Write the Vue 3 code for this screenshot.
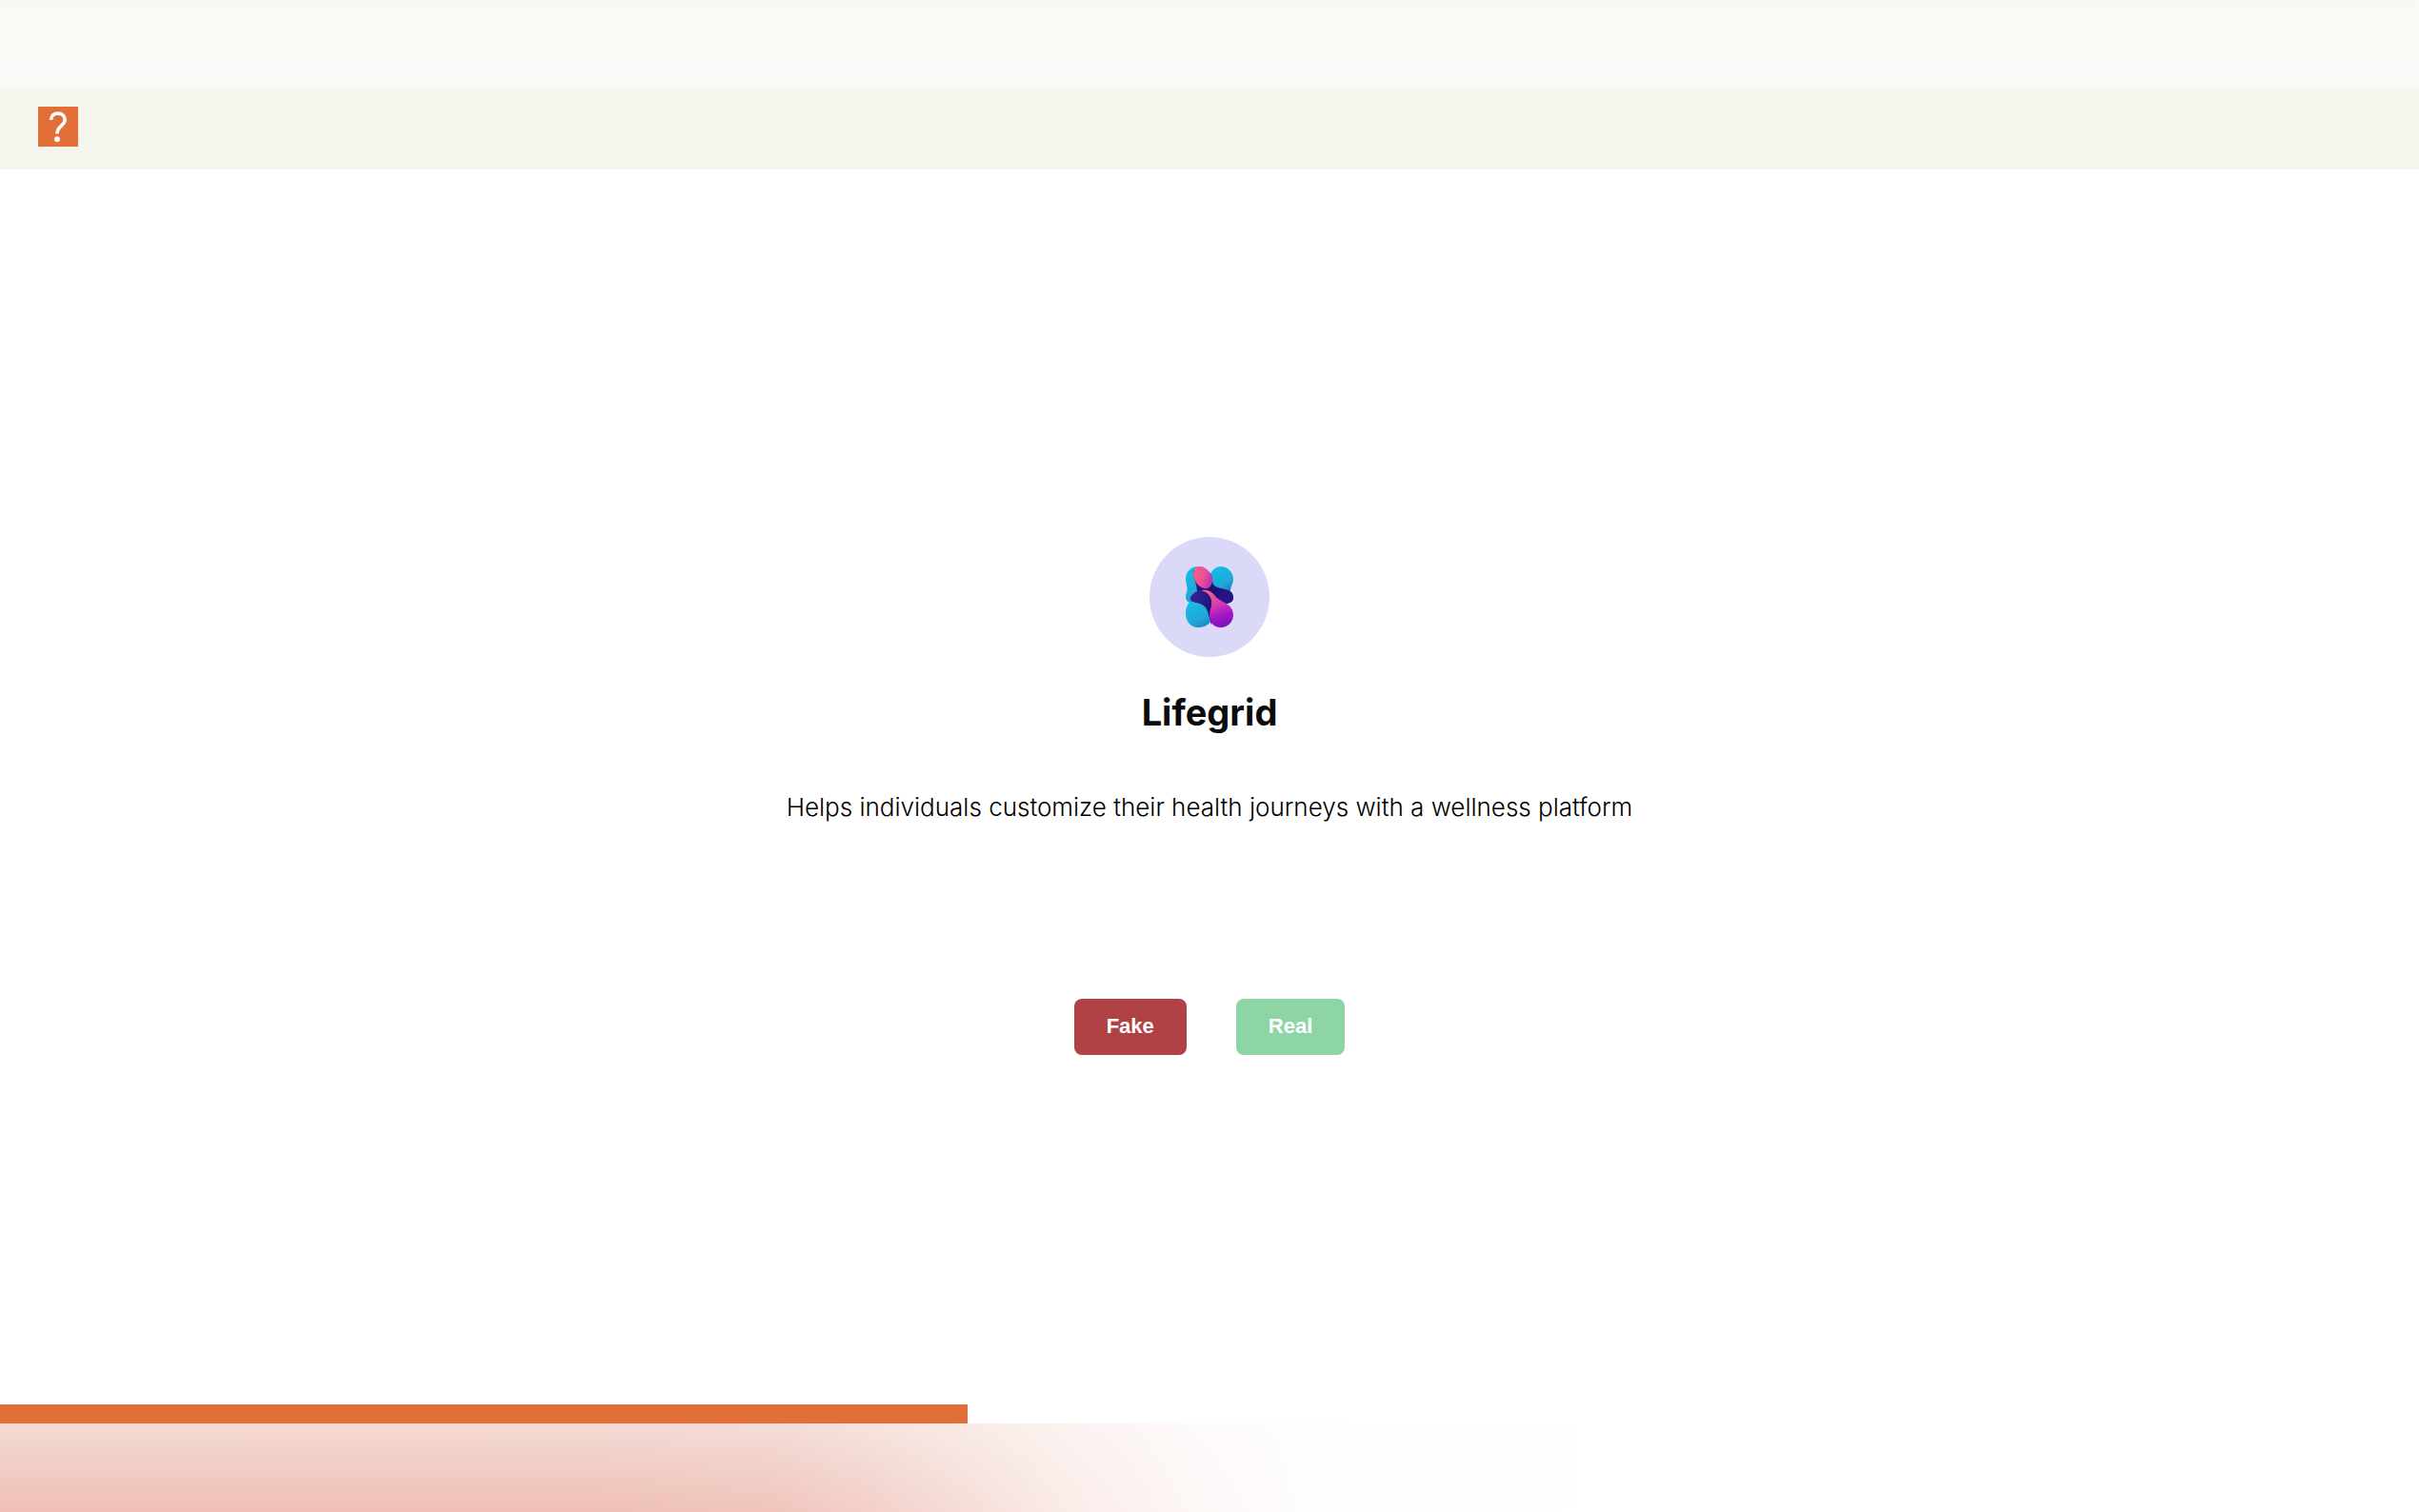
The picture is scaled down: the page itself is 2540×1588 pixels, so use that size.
<script setup>
import { ref } from 'vue'

const company = {
  name: 'Lifegrid',
  description: 'Helps individuals customize their health journeys with a wellness platform',
}
const progress = ref(40)
</script>

<template>
  <div class="page">
    <div class="top-band"></div>
    <header class="bar">
      <a class="brand" href="#" aria-label="Home">
        <svg viewBox="0 0 42 42" width="42" height="42" fill="none" aria-hidden="true">
          <path
            d="M13.600 14C13.600 9.700 16.600 7.100 20.900 7.100C25.200 7.100 28.200 9.900 28.200 13.800C28.200 20 20 20 20 28.400"
            stroke="#fff"
            stroke-width="3.6"
          />
          <circle cx="20" cy="34.2" r="2.9" fill="#fff" />
        </svg>
      </a>
    </header>

    <main class="card">
      <div class="avatar">
        <svg viewBox="0 0 50 64" width="50" height="64" aria-hidden="true">
          <defs>
            <linearGradient id="cyan" x1="0.2" y1="0" x2="0.7" y2="1">
              <stop offset="0" stop-color="#12bfe8" />
              <stop offset="0.7" stop-color="#22a6d6" />
              <stop offset="1" stop-color="#1b86c4" />
            </linearGradient>
            <linearGradient id="pink" x1="0.2" y1="0" x2="0.8" y2="1">
              <stop offset="0" stop-color="#fb6183" />
              <stop offset="0.5" stop-color="#ec5098" />
              <stop offset="1" stop-color="#b02bb8" />
            </linearGradient>
            <linearGradient id="violet" x1="0.2" y1="0" x2="0.5" y2="1">
              <stop offset="0" stop-color="#ff6279" />
              <stop offset="0.4" stop-color="#dc40ad" />
              <stop offset="0.75" stop-color="#a316c8" />
              <stop offset="1" stop-color="#7e12b8" />
            </linearGradient>
            <linearGradient id="navy" x1="0" y1="0" x2="1" y2="0.4">
              <stop offset="0" stop-color="#35208d" />
              <stop offset="0.5" stop-color="#180e7b" />
              <stop offset="1" stop-color="#281583" />
            </linearGradient>
            <linearGradient id="lobe" x1="0" y1="0" x2="1" y2="0.6">
              <stop offset="0" stop-color="#3a2796" />
              <stop offset="0.6" stop-color="#231a86" />
              <stop offset="1" stop-color="#150c74" />
            </linearGradient>
          </defs>
          <path d="M13 0C5 0 0 6 0 13C0 19 3 22 1 27C-1 32 0 36 4 38L20 36V2Z" fill="url(#cyan)" />
          <path
            d="M37 0C44 0 50 6 50 13C50 18 47 21 47 26L30 24L26 8C28 3 32 0 37 0Z"
            fill="url(#cyan)"
          />
          <path
            d="M8 4C7 12 12 18 12 26L22 40L42 39C47 39 51 36 50 31C49 22 36 25 30 20C27 17 29 10 25 6Z"
            fill="url(#navy)"
          />
          <ellipse cx="18" cy="11.500" rx="9" ry="12.500" transform="rotate(-32 18 11.500)" fill="url(#pink)" />
          <path
            d="M22 25C16 23 9 26 5 32C4 35 6 37 10 38C17 39 22 42 24 52L27 61L31 50L30 32Z"
            fill="url(#lobe)"
          />
          <path
            d="M5 36.500C1 40 0 45 0 50C0 58 6 64 13 64C19 64 24 61 26 58C24 53 24 48 21 43C17 38 10 39 5 36.500Z"
            fill="url(#cyan)"
          />
          <path
            d="M16 25.500C22 23 27 26 31 31C36 38 50 38 50 51C50 58 44 64 37 64C29 64 25 58 25 51C25 45 28 42 27 36C26 30 22 26 16 25.500Z"
            fill="url(#violet)"
          />
        </svg>
      </div>
      <h1>{{ company.name }}</h1>
      <p>{{ company.description }}</p>
      <div class="actions">
        <button class="fake" type="button">Fake</button>
        <button class="real" type="button">Real</button>
      </div>
    </main>

    <div class="track" role="progressbar" aria-label="Progress" :aria-valuenow="progress" aria-valuemin="0" aria-valuemax="100">
      <div class="fill" :style="{ width: progress + '%' }"></div>
    </div>
    <div class="bottom-band"></div>
  </div>
</template>

<style>
body {
  margin: 0;
  background: #fff;
}
</style>

<style scoped>
.page {
  display: flex;
  flex-direction: column;
  min-height: 100vh;
  background: #fff;
  color: #0b0b0b;
  font-family: Inter, "Liberation Sans", sans-serif;
}

.top-band {
  height: 93px;
  background: linear-gradient(#f8f8f4, #fafbf7 60%, #f9f9f8);
}

.bar {
  display: flex;
  align-items: center;
  box-sizing: border-box;
  height: 85px;
  padding: 0 40px 5px;
  background: #f6f5ed;
}

.brand {
  display: block;
  width: 42px;
  height: 42px;
  background: #e16f37;
}

.brand svg,
.avatar svg {
  display: block;
}

.card {
  display: flex;
  flex: 1;
  flex-direction: column;
  align-items: center;
  justify-content: center;
  padding-top: 18px;
}

.avatar {
  display: flex;
  align-items: center;
  justify-content: center;
  width: 126px;
  height: 126px;
  border-radius: 50%;
  background: #dadaf8;
}

h1 {
  margin: 34px 0 0;
  font-size: 38px;
  font-weight: 700;
  line-height: 48px;
}

p {
  margin: 58px 0 0;
  font-size: 26px;
  font-weight: 340;
  line-height: 36px;
  color: #000;
}

.actions {
  display: flex;
  gap: 52px;
  margin-top: 183px;
}

button {
  height: 59px;
  padding: 0 34px;
  border: 0;
  border-radius: 8px;
  color: #fff;
  font: bold 22px "Liberation Sans", Arial, sans-serif;
  cursor: pointer;
}

.fake {
  background: #b04245;
}

.real {
  background: #8dd5a5;
}

.track {
  height: 20px;
}

.fill {
  height: 100%;
  background: #e16f37;
}

.bottom-band {
  height: 93px;
  background:
    linear-gradient(
      96deg,
      rgb(255 255 255 / 0) 24%,
      rgb(255 255 255 / 0.08) 32%,
      rgb(255 255 255 / 0.25) 36%,
      rgb(255 255 255 / 0.46) 40%,
      rgb(255 255 255 / 0.68) 44%,
      rgb(255 255 255 / 0.86) 49%,
      rgb(255 255 255 / 0.96) 54%,
      #fff 66%
    ),
    linear-gradient(#f4dad4, #efcac1 60%, #f0bfb6);
}
</style>
